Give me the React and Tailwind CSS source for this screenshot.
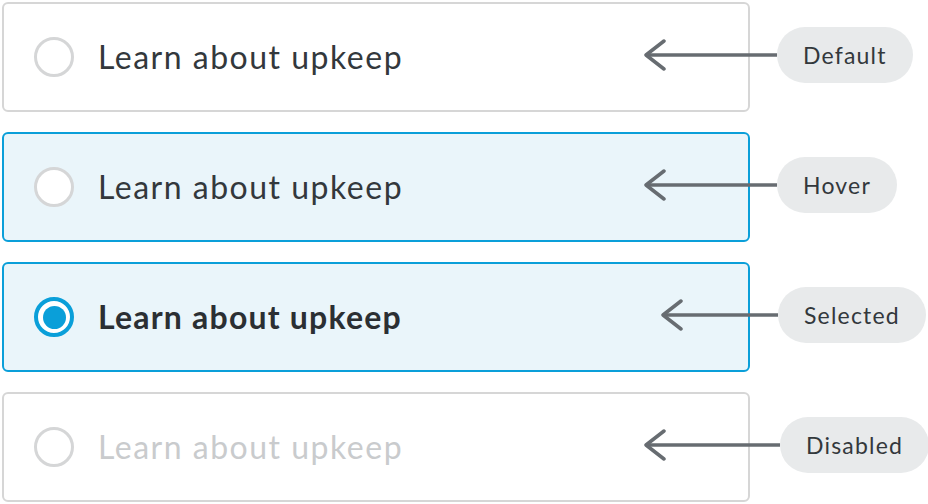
import React from 'react';

const rows = [
  { label: 'Default', state: 'default', arrow: 134, offset: -107 },
  { label: 'Hover', state: 'hover', arrow: 134, offset: -107 },
  { label: 'Selected', state: 'selected', arrow: 118, offset: -90 },
  { label: 'Disabled', state: 'disabled', arrow: 137, offset: -107 },
];

const Radio = ({ state }) => {
  if (state === 'selected') {
    return (
      <div className="w-[40px] h-[40px] rounded-full border-[4px] border-[#0a9fd9] bg-white flex items-center justify-center shrink-0">
        <div className="w-[23px] h-[23px] rounded-full bg-[#0a9fd9]" />
      </div>
    );
  }
  return <div className="w-[40px] h-[40px] rounded-full border-[3.5px] border-[#d5d6d7] bg-white shrink-0" />;
};

const Arrow = ({ width }) => (
  <svg width={width} height="32" viewBox={`0 0 ${width} 32`} className="shrink-0">
    <line x1="3" y1="16" x2={width} y2="16" stroke="#676c71" strokeWidth="3.5" />
    <polyline
      points="21,2 3,16 21,30"
      fill="none"
      stroke="#676c71"
      strokeWidth="3.5"
      strokeLinecap="round"
      strokeLinejoin="round"
    />
  </svg>
);

const App = () => {
  return (
    <div className="w-[928px] h-[504px] bg-white pt-[2px] pl-[2px] flex flex-col gap-[20px]" style={{ fontFamily: 'Lato, "Noto Sans", sans-serif' }}>
      {rows.map((row) => {
        const card =
          row.state === 'hover' || row.state === 'selected'
            ? 'border-[#0a9fd9] bg-[#eaf5fa]'
            : 'border-[#d6d6d6] bg-white';
        const text =
          row.state === 'selected'
            ? 'font-bold tracking-[1.2px] text-[#2b2f33]'
            : row.state === 'disabled'
            ? 'tracking-[1.5px] text-[#c9cbcd]'
            : 'tracking-[1.5px] text-[#33383c]';
        return (
          <div key={row.label} className="flex items-center">
            <div className={`w-[748px] h-[110px] shrink-0 rounded-[6px] border-2 flex items-center gap-[24px] pl-[30px] ${card}`}>
              <Radio state={row.state} />
              <span className={`text-[32px] leading-none ${text}`}>Learn about upkeep</span>
            </div>
            <div className="flex items-center mb-[4px]" style={{ marginLeft: row.offset }}>
              <Arrow width={row.arrow} />
              <div className="h-[56px] rounded-full bg-[#e8eaeb] px-[26px] flex items-center text-[23px] tracking-[1.2px] text-[#33383c]">
                {row.label}
              </div>
            </div>
          </div>
        );
      })}
    </div>
  );
};

export default App;
